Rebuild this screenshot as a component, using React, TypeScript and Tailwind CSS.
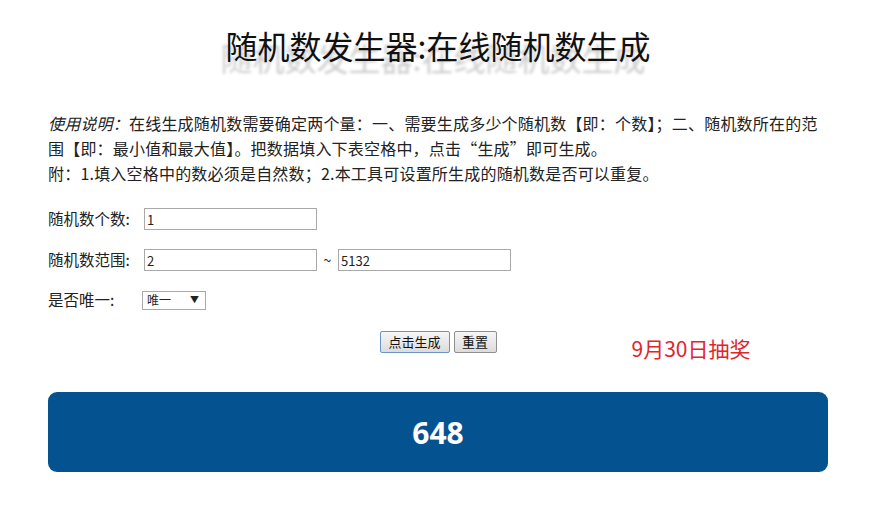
import React from "react";

export default function App() {
  const cjk = { fontFamily: '"Noto Sans CJK SC", "Noto Sans", sans-serif' };
  return (
    <div className="w-[890px] h-[506px] bg-white text-[#222] overflow-hidden" style={cjk}>
      <div className="ml-[48px] w-[780px] flex flex-col">
        <h1 className="pt-[23px] text-center text-[32px] leading-[44px] text-[#111] font-normal [text-shadow:-5px_12px_3px_rgba(0,0,0,0.2)]">
          随机数发生器:在线随机数生成
        </h1>
        <div className="mt-[44px] text-[16px] tracking-[0.2px] leading-[25px] text-[#222]">
          <p>
            <i>使用说明：</i>在线生成随机数需要确定两个量：一、需要生成多少个随机数【即：个数】；二、随机数所在的范围【即：最小值和最大值】。把数据填入下表空格中，点击“生成”即可生成。
          </p>
          <p>附：1.填入空格中的数必须是自然数；2.本工具可设置所生成的随机数是否可以重复。</p>
        </div>
        <div className="mt-[22px] flex flex-col gap-[19px] text-[15.5px]">
          <div className="flex items-center h-[22px]">
            <span className="w-[96px]">随机数个数:</span>
            <input
              readOnly
              value="1"
              className="w-[173px] h-[22px] border border-[#a9a9a9] px-[2px] text-[13px] outline-none"
            />
          </div>
          <div className="flex items-center h-[22px]">
            <span className="w-[96px]">随机数范围:</span>
            <input
              readOnly
              value="2"
              className="w-[173px] h-[22px] border border-[#a9a9a9] px-[2px] text-[13px] outline-none"
            />
            <span className="w-[21px] text-center text-[14px]">~</span>
            <input
              readOnly
              value="5132"
              className="w-[173px] h-[22px] border border-[#a9a9a9] px-[2px] text-[13px] outline-none"
            />
          </div>
          <div className="flex items-center h-[20px]">
            <span className="w-[94px]">是否唯一:</span>
            <div className="w-[64px] h-[19px] border border-[#a9a9a9] flex items-center justify-between pl-[4px] pr-[6px] text-[12px]">
              <span>唯一</span>
              <span className="text-[9px]">▼</span>
            </div>
          </div>
        </div>
        <div className="mt-[20px] grid grid-cols-[1fr_auto_1fr]">
          <div />
          <div className="flex gap-[4px] pt-[1px]">
            <button className="w-[70px] h-[22px] border border-[#6d93c9] rounded-[2px] bg-gradient-to-b from-[#f6f6f6] to-[#dcdcdc] text-[13px] text-[#111]">
              点击生成
            </button>
            <button className="w-[43px] h-[22px] border border-[#8f8f8f] rounded-[2px] bg-gradient-to-b from-[#f6f6f6] to-[#dcdcdc] text-[13px] text-[#111]">
              重置
            </button>
          </div>
          <div className="pl-[135px] pt-[5px] text-[21px] leading-[26px] text-[#e0262a] whitespace-nowrap">
            9月30日抽奖
          </div>
        </div>
        <div className="mt-[31px] h-[80px] rounded-[9px] bg-[#04528f] flex items-center justify-center">
          <span
            className="text-white text-[30px] font-bold"
            style={{ fontFamily: '"Open Sans", "Noto Sans", sans-serif' }}
          >
            648
          </span>
        </div>
      </div>
    </div>
  );
}
